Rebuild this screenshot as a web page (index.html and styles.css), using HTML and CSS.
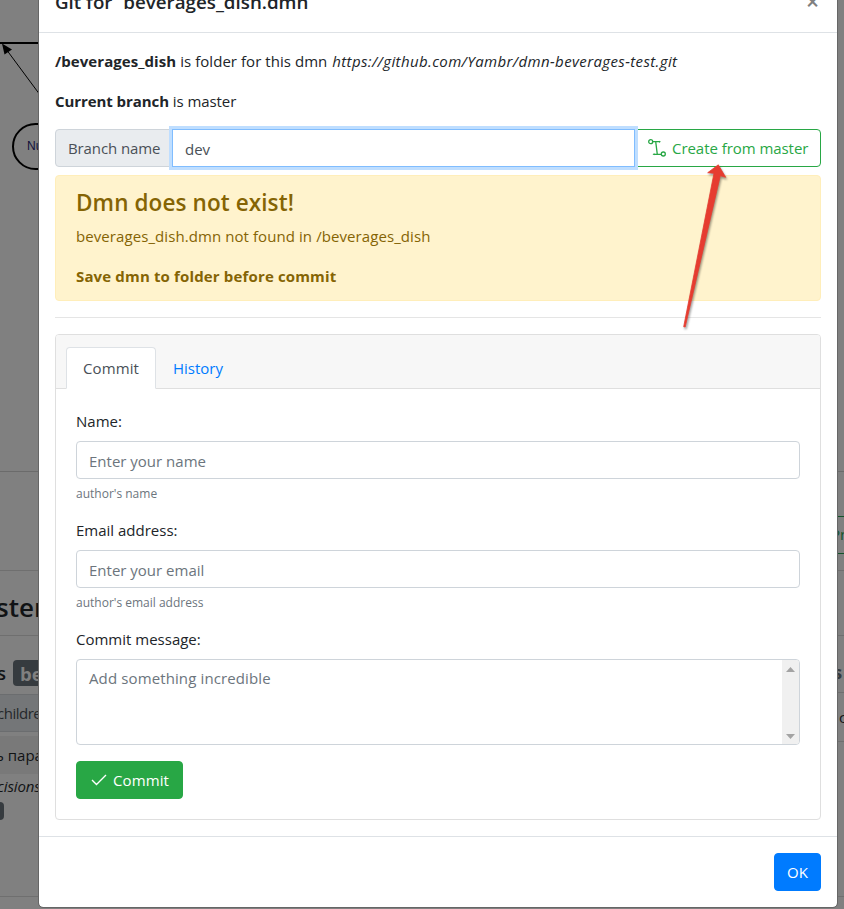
FILE: index.html
```html
<!DOCTYPE html>
<html lang="en">
<head>
<meta charset="utf-8">
<title>Git</title>
<link rel="stylesheet" href="styles.css">
</head>
<body>
<div class="page">
  <section class="diagram">
    <svg width="60" height="200" viewBox="0 0 60 200">
      <path d="M0 43H60" stroke="#000" stroke-width="2"/>
      <path d="M6 49L46 103" stroke="#000" stroke-width="1"/>
      <path d="M2 43.5L12 49.5L4.500 54.500Z" fill="#000"/>
      <rect x="13" y="124" width="90" height="45" rx="22.500" fill="none" stroke="#000" stroke-width="2"/>
      <text x="27" y="150" class="node-text">Nu</text>
    </svg>
  </section>
  <section class="toolbar"><span class="tool-btn">Pr</span></section>
  <section class="page-title">ster</section>
  <section class="columns">
    <div class="col-left">
      <div class="col-title">s <span class="badge">bev</span></div>
      <div class="col-head">childre</div>
      <div class="col-row">ь пара</div>
      <div class="col-note">cisions</div>
      <span class="chip"></span>
    </div>
    <div class="col-right">
      <div class="right-title">s</div>
      <div class="right-row">c</div>
    </div>
  </section>
</div>

<div class="modal">
  <header class="modal-header">
    <h5 class="modal-title">Git for `beverages_dish.dmn</h5>
    <span class="close">×</span>
  </header>
  <main class="modal-body">
    <p><b>/beverages_dish</b> is folder for this dmn <i>https://github.com/Yambr/dmn-beverages-test.git</i></p>
    <p class="branch"><b>Current branch</b> is master</p>
    <div class="input-group">
      <span class="addon">Branch name</span>
      <input class="control focused" value="dev">
      <button class="btn btn-outline">
        <svg width="18" height="18" viewBox="0 0 18 18" fill="none" stroke="#28a745" stroke-width="1.300">
          <circle cx="2.700" cy="2.700" r="2"/><path d="M4.700 2.700H12M7.700 2.700L9.300 15.300M5.500 15.300H13.300"/><circle cx="15.300" cy="15" r="2"/>
          <path d="M11 1.700L13 2.700L11 3.700ZM6.500 14.300L4.500 15.300L6.500 16.300Z" fill="#28a745" stroke="none"/>
        </svg>
        Create from master
      </button>
    </div>
    <div class="alert">
      <h4>Dmn does not exist!</h4>
      <p>beverages_dish.dmn not found in /beverages_dish</p>
      <p><b>Save dmn to folder before commit</b></p>
    </div>
    <hr>
    <div class="card">
      <nav class="tabs">
        <a class="tab active">Commit</a>
        <a class="tab">History</a>
      </nav>
      <div class="card-body">
        <div class="form-group">
          <label>Name:</label>
          <input class="control" placeholder="Enter your name">
          <small>author's name</small>
        </div>
        <div class="form-group">
          <label>Email address:</label>
          <input class="control" placeholder="Enter your email">
          <small>author's email address</small>
        </div>
        <div class="form-group">
          <label>Commit message:</label>
          <div class="area">
            <span class="area-text">Add something incredible</span>
            <div class="scrollbar">
              <svg width="9" height="5" viewBox="0 0 9 5"><path d="M4.500 0L9 5H0Z" fill="#a3a3a3"/></svg>
              <svg width="9" height="5" viewBox="0 0 9 5"><path d="M4.500 5L9 0H0Z" fill="#a3a3a3"/></svg>
            </div>
          </div>
        </div>
        <button class="btn btn-success">
          <svg width="16" height="12" viewBox="0 0 16 12" fill="none" stroke="#fff" stroke-width="1.400"><path d="M1 6L5.500 10.500L15 1"/></svg>
          Commit
        </button>
      </div>
    </div>
  </main>
  <footer class="modal-footer"><button class="btn btn-primary">OK</button></footer>
</div>

<svg class="pointer" width="60" height="176" viewBox="676 158 60 176">
  <path d="M718.300 164.800L725.700 177.300L720.300 175.700L685.200 327L683.700 326.700L714 173.300L707.700 172.700Z" fill="#e63c30" stroke="#e63c30" stroke-width=".8" stroke-linejoin="round"/>
</svg>
</body>
</html>
```
FILE: styles.css
```css
* { box-sizing: border-box; }
body {
  margin: 0;
  height: 909px;
  overflow: hidden;
  position: relative;
  background: #808080;
  color: #212529;
  font: 15px/24px "Open Sans", "Noto Sans", sans-serif;
}
p, h4, h5 { margin: 0; }
b { font-weight: 700; letter-spacing: .07px; }
i { letter-spacing: .38px; margin-left: 1px; }
button, input { font: inherit; color: inherit; margin: 0; }

.page { height: 909px; overflow: hidden; color: #111315; }
.diagram { height: 472px; border-bottom: 1px solid #6b6b6b; }
.node-text { font: 12px "Liberation Sans", sans-serif; fill: #10103a; }
.toolbar {
  height: 99px;
  padding-top: 44px;
  border-bottom: 1px solid #6f6f6f;
  display: flex;
  justify-content: flex-end;
}
.tool-btn {
  width: 12px;
  height: 38px;
  line-height: 34px;
  border: 1px solid #14532a;
  border-width: 1px 0;
  color: #14532a;
  text-indent: -1px;
  overflow: hidden;
}
.page-title {
  height: 65px;
  border-bottom: 1px solid #6f6f6f;
  font-size: 26px;
  font-weight: 600;
  line-height: 73px;
  margin-left: -4px;
}
.columns {
  height: 261px;
  border-bottom: 1px solid #6f6f6f;
  display: flex;
  justify-content: space-between;
}
.col-left { width: 400px; }
.col-title {
  height: 58px;
  padding-top: 24px;
  margin-left: -3px;
  display: flex;
  gap: 7px;
  font-size: 18.5px;
  font-weight: 600;
  line-height: 26px;
}
.badge {
  height: 26px;
  padding: 0 7px;
  border-radius: 4px;
  background: #363b3f;
  color: #808080;
  line-height: 28px;
  font-weight: 700;
}
.col-head {
  height: 38px;
  border: 1px solid #6b6d6f;
  border-width: 1px 0;
  background: #747678;
  color: #25282b;
  line-height: 36px;
  text-indent: -3px;
  letter-spacing: -.5px;
}
.col-row {
  height: 38px;
  margin-top: 4px;
  background: #797979;
  line-height: 38px;
  text-indent: -5px;
}
.col-note { font-style: italic; line-height: 25px; text-indent: -3px; letter-spacing: -.1px; }
.chip {
  display: block;
  width: 4px;
  height: 18px;
  margin-top: 3px;
  border-radius: 0 4px 4px 0;
  background: #363b3f;
}
.col-right { width: 8px; }
.right-title {
  height: 57px;
  padding-top: 24px;
  border-bottom: 1px solid #6f6f6f;
  color: #363b3f;
  font-size: 18.5px;
  font-weight: 700;
  text-indent: -3px;
}
.right-row { height: 49px; border-bottom: 1px solid #6f6f6f; line-height: 49px; text-indent: 3px; }

.modal {
  position: absolute;
  top: -31px;
  left: 38px;
  width: 800px;
  border: 1px solid #666;
  border-radius: 5px;
  background: #fff;
  background-clip: padding-box;
}
.modal-header {
  height: 63px;
  padding: 16px;
  border-bottom: 1px solid #dee2e6;
  display: flex;
  justify-content: space-between;
}
.modal-title { font-size: 18.750px; font-weight: 600; line-height: 32px; }
.close {
  width: 17px;
  color: #808080;
  font: 600 23px/31px "Open Sans", sans-serif;
  text-align: center;
}
.modal-body { padding: 16px; }
.modal-body > p { margin-bottom: 16px; }
.modal-body > p:first-child { letter-spacing: .05px; }
.modal-body > p i { letter-spacing: .38px; }
.branch, .branch b { letter-spacing: -.07px; }
.control {
  width: 100%;
  height: 38px;
  display: block;
  padding: 8px 12px 6px;
  border: 1px solid #ced4da;
  border-radius: 4px;
  outline: 0;
  background: #fff;
  color: #495057;
}
.control::placeholder { color: #6c757d; opacity: 1; }
.input-group { display: flex; height: 38px; }
.addon {
  width: 117px;
  padding: 0 12px;
  border: 1px solid #ced4da;
  border-radius: 4px 0 0 4px;
  background: #e9ecef;
  color: #495057;
  line-height: 37px;
  letter-spacing: -.1px;
  white-space: nowrap;
}
.focused {
  flex: 1;
  width: auto;
  min-width: 0;
  border-color: #80bdff;
  border-radius: 0;
  box-shadow: 0 0 0 3px #bfdeff;
  position: relative;
}
.btn {
  height: 38px;
  padding: 0 12px;
  border: 1px solid;
  border-radius: 4px;
  display: flex;
  align-items: center;
  line-height: 38px;
  white-space: nowrap;
}
.btn-outline {
  width: 187px;
  margin-left: -1px;
  gap: 6px;
  padding: 0 0 0 13px;
  border-color: #28a745;
  border-radius: 0 4px 4px 0;
  background: #fff;
  color: #28a745;
  letter-spacing: -.05px;
}
.alert {
  height: 126px;
  margin-top: 8px;
  padding: 12px 20px;
  border: 1px solid #ffeeba;
  border-radius: 4px;
  background: #fff3cd;
  color: #856404;
}
.alert h4 { margin-bottom: 6px; font-size: 22.500px; line-height: 30px; font-weight: 600; letter-spacing: .1px; }
.alert p { margin-bottom: 16px; letter-spacing: .08px; }
.alert b { letter-spacing: .15px; }
hr { margin: 16px 0; border: 0; border-top: 1px solid #e5e5e5; }
.card { border: 1px solid #dfdfdf; border-radius: 4px; height: 486px; }
.tabs {
  height: 54px;
  padding: 12px 10px 0;
  border-bottom: 1px solid #dfdfdf;
  border-radius: 3px 3px 0 0;
  background: #f7f7f7;
  display: flex;
}
.tab {
  height: 42px;
  padding: 0 16px;
  border: 1px solid transparent;
  border-radius: 4px 4px 0 0;
  color: #007bff;
  line-height: 41px;
}
.active { width: 90px; border-color: #dee2e6 #dee2e6 #fff; background: #fff; color: #495057; letter-spacing: .1px; }
.card-body { padding: 20px; }
.form-group { margin-bottom: 16px; }
label { display: block; height: 32px; }
small { display: block; margin-top: 4px; height: 19px; font-size: 12px; line-height: 21px; color: #6c757d; }
.form-group + .form-group { margin-top: -1px; padding-top: 1px; }
.area {
  height: 86px;
  border: 1px solid #ced4da;
  border-radius: 4px;
  display: flex;
  justify-content: space-between;
  overflow: hidden;
  color: #6c757d;
}
.area-text { padding: 6px 12px; letter-spacing: .12px; }
.scrollbar {
  width: 17px;
  padding: 7px 4px 5px;
  background: #f0f0f0;
  display: flex;
  flex-direction: column;
  justify-content: space-between;
}
.btn-success { width: 107px; padding-left: 14px; gap: 6px; border-color: #28a745; background: #28a745; color: #fff; letter-spacing: .1px; }
.modal-footer { height: 71px; padding: 16px; border-top: 1px solid #dee2e6; display: flex; justify-content: flex-end; }
.btn-primary { width: 47px; justify-content: center; padding: 0; border-color: #007bff; background: #007bff; color: #fff; }
.pointer { position: absolute; left: 676px; top: 158px; filter: drop-shadow(1px 2px 1px rgba(0, 0, 0, .4)); }
```
